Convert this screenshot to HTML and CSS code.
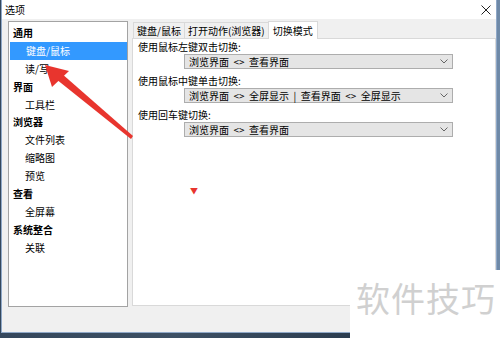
FILE: index.html
```html
<!DOCTYPE html>
<html lang="zh">
<head>
  <meta charset="UTF-8">
  <title>选项</title>
  <link rel="stylesheet" href="styles.css">
</head>
<body>

  <div class="desktop">
    <div class="window">
      <div class="titlebar">
        <span class="title">选项</span>
        <svg class="close" width="10" height="10" viewBox="0 0 10 10">
          <path d="M0.5 0.5 L9.5 9.5 M9.5 0.5 L0.5 9.5" stroke="#222" stroke-width="1"/>
        </svg>
      </div>

      <div class="main">
        <div class="tree">
          <div class="group">通用</div>
          <div class="item selected">键盘/鼠标</div>
          <div class="item">读/写</div>
          <div class="group">界面</div>
          <div class="item">工具栏</div>
          <div class="group">浏览器</div>
          <div class="item">文件列表</div>
          <div class="item">缩略图</div>
          <div class="item">预览</div>
          <div class="group">查看</div>
          <div class="item">全屏幕</div>
          <div class="group">系统整合</div>
          <div class="item">关联</div>
        </div>

        <div class="panel">
          <div class="tabs">
            <div class="tab">键盘/鼠标</div>
            <div class="tab">打开动作(浏览器)</div>
            <div class="tab active">切换模式</div>
          </div>
          <div class="page">
            <div class="field">
              <div class="label">使用鼠标左键双击切换:</div>
              <div class="select">
                <span>浏览界面 &nbsp;&lt;&gt;&nbsp; 查看界面</span>
                <svg width="8" height="5" viewBox="0 0 8 5"><path d="M0.5 0.5 L4 4 L7.5 0.5" fill="none" stroke="#666" stroke-width="1"/></svg>
              </div>
            </div>
            <div class="field">
              <div class="label">使用鼠标中键单击切换:</div>
              <div class="select">
                <span>浏览界面 &nbsp;&lt;&gt;&nbsp; 全屏显示 &nbsp;|&nbsp; 查看界面 &nbsp;&lt;&gt;&nbsp; 全屏显示</span>
                <svg width="8" height="5" viewBox="0 0 8 5"><path d="M0.5 0.5 L4 4 L7.5 0.5" fill="none" stroke="#666" stroke-width="1"/></svg>
              </div>
            </div>
            <div class="field">
              <div class="label">使用回车键切换:</div>
              <div class="select">
                <span>浏览界面 &nbsp;&lt;&gt;&nbsp; 查看界面</span>
                <svg width="8" height="5" viewBox="0 0 8 5"><path d="M0.5 0.5 L4 4 L7.5 0.5" fill="none" stroke="#666" stroke-width="1"/></svg>
              </div>
            </div>
          </div>
        </div>
      </div>
    </div>

    <svg class="arrow" width="120" height="90" viewBox="0 0 120 90">
      <polygon points="97,81 99,78 27,15 22,21" fill="#e8352e"/>
      <polygon points="11,7 35,13 18,29" fill="#e8352e"/>
    </svg>
    <div class="marker">▼</div>

    <div class="watermark">软件技巧</div>
  </div>

</body>
</html>
```

FILE: styles.css
```css
body {
  margin: 0;
  font-family: "Noto Sans CJK SC", "Noto Sans", sans-serif;
  font-size: 10px;
  color: #000;
}

.desktop {
  position: relative;
  width: 500px;
  height: 338px;
  overflow: hidden;
  background: linear-gradient(90deg, #34475c 0, #3d5064 35%, #2c3d50 70%, #6f8aa8 100%);
}

.window {
  width: 494px;
  height: 332px;
  margin-left: 1px;
  background: #f0f0f0;
  border: 1px solid #8fa8c8;
  border-top: none;
  display: flex;
  flex-direction: column;
}

.titlebar {
  height: 19px;
  background: #fff;
  display: flex;
  align-items: center;
  justify-content: space-between;
  padding: 0 5px 0 3px;
}

.title {
  font-size: 10px;
  line-height: 1;
}

.main {
  display: flex;
  gap: 4px;
  padding: 2px 0 0 6px;
}

.tree {
  width: 120px;
  height: 286px;
  background: #fff;
  border: 1px solid #a3a3a3;
  padding-top: 2px;
  box-sizing: border-box;
}

.group,
.item {
  height: 17.9px;
  line-height: 17.9px;
  padding-left: 4px;
  white-space: nowrap;
}

.group {
  font-weight: bold;
}

.item {
  padding-left: 16px;
}

.item.selected {
  background: #3399ff;
  color: #fff;
  margin-left: 1px;
}

.panel {
  flex: 1;
  display: flex;
  flex-direction: column;
}

.tabs {
  display: flex;
  height: 17px;
  align-items: flex-end;
  padding-left: 1px;
}

.tab {
  height: 15px;
  line-height: 15px;
  padding: 0 3px;
  background: #f0f0f0;
  border: 1px solid #d9d9d9;
  border-bottom: none;
  margin-right: -1px;
  white-space: nowrap;
}

.tab.active {
  height: 17px;
  line-height: 17px;
  padding: 0 4px;
  background: #fff;
  position: relative;
  z-index: 1;
  margin-bottom: -1px;
}

.page {
  height: 268px;
  background: #fff;
  border: 1px solid #d9d9d9;
  box-sizing: border-box;
  padding: 1px 0 0 5px;
}

.field {
  margin-bottom: 5px;
}

.label {
  height: 14px;
  line-height: 14px;
}

.select {
  margin-left: 46px;
  width: 269px;
  height: 15px;
  background: #e5e5e5;
  border: 1px solid #adadad;
  box-sizing: border-box;
  display: flex;
  align-items: center;
  justify-content: space-between;
  padding: 0 4px 0 4px;
  line-height: 13px;
}

.arrow {
  position: absolute;
  left: 34px;
  top: 58px;
}

.marker {
  position: absolute;
  left: 190px;
  top: 185px;
  font-size: 8px;
  color: #e8352e;
}

.watermark {
  position: absolute;
  left: 350px;
  top: 270px;
  width: 150px;
  height: 68px;
  background: #fff;
  color: #d0d0d0;
  font-size: 34px;
  line-height: 56px;
  padding-left: 6px;
  box-sizing: border-box;
  letter-spacing: 1px;
}
```
